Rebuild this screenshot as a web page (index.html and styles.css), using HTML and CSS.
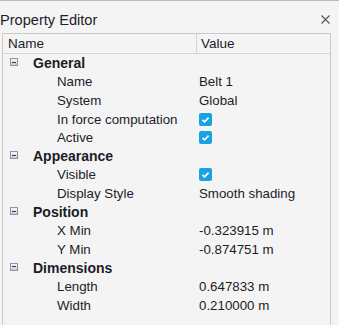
FILE: index.html
```html
<!DOCTYPE html>
<html>
<head>
<meta charset="utf-8">
<link rel="stylesheet" href="styles.css">
</head>
<body>
<div class="panel">
  <div class="titlebar">
    <span class="title">Property Editor</span>
    <svg class="close" width="9" height="9" viewBox="0 0 9 9"><path d="M0.5 0.5L8.5 8.5M8.5 0.5L0.5 8.5" stroke="#555" stroke-width="1.1"/></svg>
  </div>
  <div class="grid">
    <div class="head">
      <div class="hcell hname">Name</div>
      <div class="hcell hval">Value</div>
    </div>
    <div class="row cat"><span class="exp"></span><span class="cname">General</span></div>
    <div class="row prop"><span class="pname">Name</span><span class="pval">Belt 1</span></div>
    <div class="row prop"><span class="pname">System</span><span class="pval">Global</span></div>
    <div class="row prop"><span class="pname">In force computation</span><span class="pval"><span class="chk"><svg width="13" height="13" viewBox="0 0 13 13"><path d="M3.5 6.8L5.6 8.8L9.6 4.6" fill="none" stroke="#fff" stroke-width="1.6"/></svg></span></span></div>
    <div class="row prop"><span class="pname">Active</span><span class="pval"><span class="chk"><svg width="13" height="13" viewBox="0 0 13 13"><path d="M3.5 6.8L5.6 8.8L9.6 4.6" fill="none" stroke="#fff" stroke-width="1.6"/></svg></span></span></div>
    <div class="row cat"><span class="exp"></span><span class="cname">Appearance</span></div>
    <div class="row prop"><span class="pname">Visible</span><span class="pval"><span class="chk"><svg width="13" height="13" viewBox="0 0 13 13"><path d="M3.5 6.8L5.6 8.8L9.6 4.6" fill="none" stroke="#fff" stroke-width="1.6"/></svg></span></span></div>
    <div class="row prop"><span class="pname">Display Style</span><span class="pval">Smooth shading</span></div>
    <div class="row cat"><span class="exp"></span><span class="cname">Position</span></div>
    <div class="row prop"><span class="pname">X Min</span><span class="pval">-0.323915 m</span></div>
    <div class="row prop"><span class="pname">Y Min</span><span class="pval">-0.874751 m</span></div>
    <div class="row cat"><span class="exp"></span><span class="cname">Dimensions</span></div>
    <div class="row prop"><span class="pname">Length</span><span class="pval">0.647833 m</span></div>
    <div class="row prop"><span class="pname">Width</span><span class="pval">0.210000 m</span></div>
  </div>
</div>
</body>
</html>
```
FILE: styles.css
```css
html, body {
  margin: 0;
  padding: 0;
  background: #f4f4f4;
  height: 100%;
  overflow: hidden;
}
.panel {
  border-top: 1px solid #bdbdbd;
  height: 324px;
  font-family: "Liberation Sans", Arial, sans-serif;
  color: #1c1c28;
}
.titlebar {
  height: 32px;
  display: flex;
  align-items: center;
  justify-content: space-between;
  padding-right: 9px;
}
.title {
  font-size: 14.6px;
  padding-top: 5px;
  color: #1e1e2a;
}
.close {
  margin-top: 4px;
}
.grid {
  margin-left: 2px;
  width: 327px;
  height: 292px;
  border: 1px solid #c9c9c9;
  border-bottom: none;
}
.head {
  display: flex;
  height: 19px;
  border-bottom: 1px solid #d4d4d4;
  font-size: 13.5px;
}
.hcell {
  display: flex;
  align-items: center;
}
.hname {
  width: 188px;
  padding-left: 5px;
  border-right: 1px solid #d4d4d4;
}
.hval {
  padding-left: 4px;
}
.row {
  height: 18.6px;
  display: flex;
  align-items: center;
}
.cat {
  font-weight: bold;
  font-size: 14px;
}
.exp {
  width: 7px;
  height: 7px;
  margin-left: 7px;
  margin-right: 15px;
  margin-top: -2px;
  border: 1px solid #8c94a4;
  background: linear-gradient(#f4f6fa, #c8d0dc);
  position: relative;
  box-sizing: border-box;
  width: 8px;
  height: 8px;
}
.exp::after {
  content: "";
  position: absolute;
  left: 1px;
  right: 1px;
  top: 2.5px;
  height: 1px;
  background: #333a48;
}
.prop {
  font-size: 13.3px;
}
.pname {
  width: 142px;
  padding-left: 54px;
  flex: none;
}
.pval {
  display: flex;
  align-items: center;
}
.chk {
  width: 13px;
  height: 13px;
  border-radius: 2px;
  background: #17a2e0;
  display: block;
}
.chk svg {
  display: block;
}
```
